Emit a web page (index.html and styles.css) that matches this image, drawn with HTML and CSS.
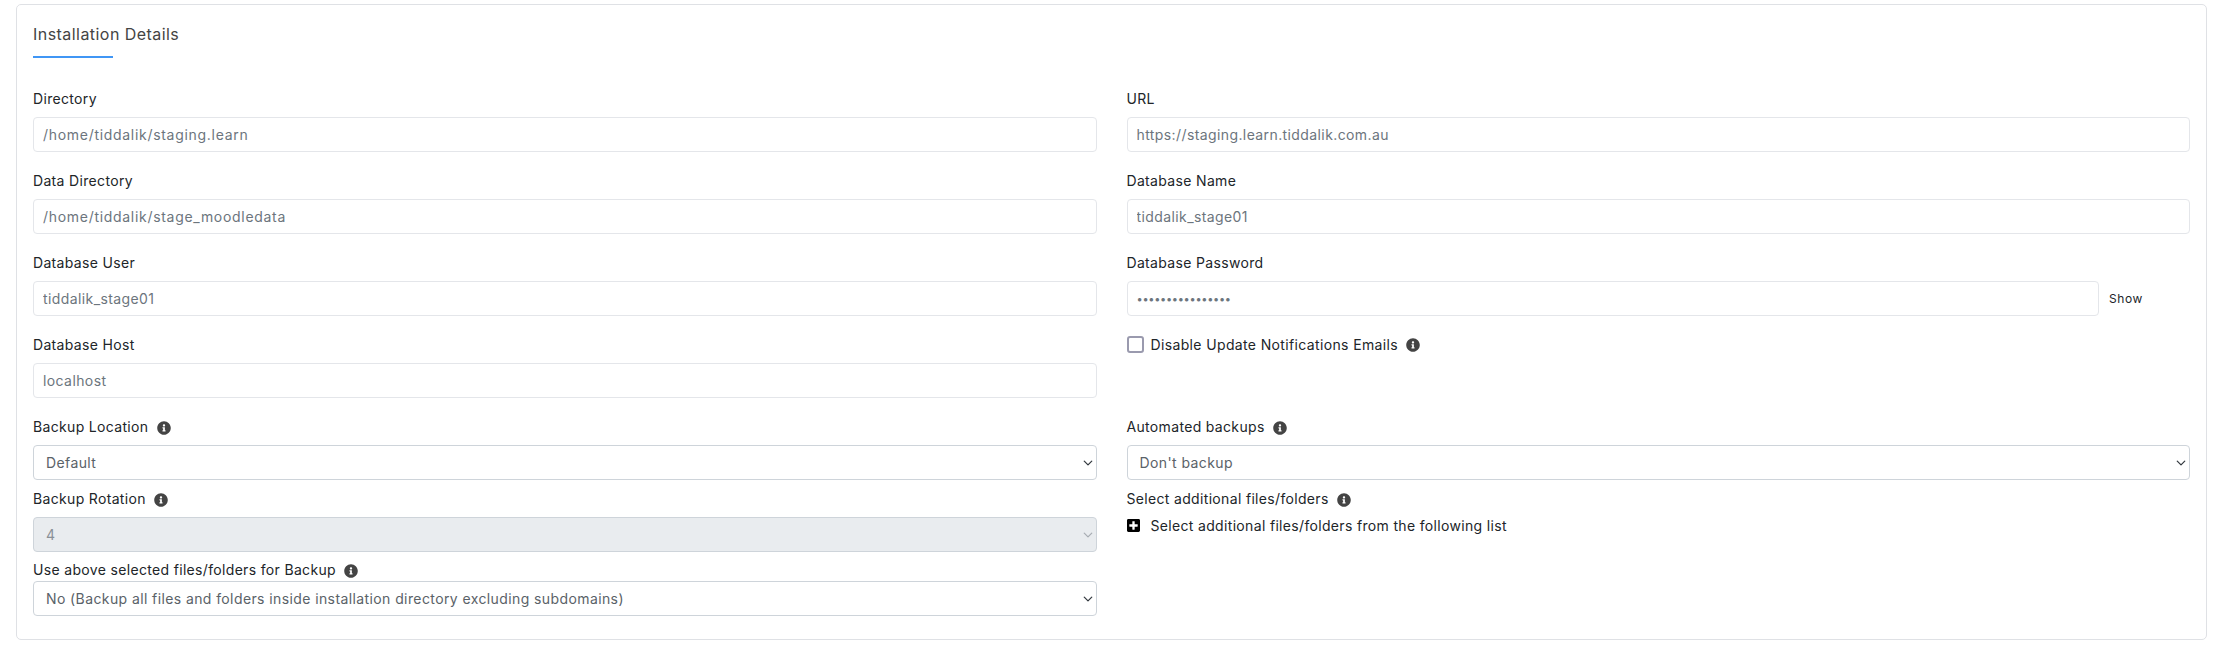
FILE: index.html
```html
<!DOCTYPE html>
<html>
<head>
  <title>Installation Details</title>
  <link rel="stylesheet" href="styles.css">
</head>
<body>

<svg class="icon-defs" width="0" height="0">
  <symbol id="info" viewBox="0 0 512 512"><path d="M256 8C119.043 8 8 119.083 8 256c0 136.997 111.043 248 248 248s248-111.003 248-248C504 119.083 392.957 8 256 8zm0 110c23.196 0 42 18.804 42 42s-18.804 42-42 42-42-18.804-42-42 18.804-42 42-42zm56 254c0 6.627-5.373 12-12 12h-88c-6.627 0-12-5.373-12-12v-24c0-6.627 5.373-12 12-12h12v-64h-12c-6.627 0-12-5.373-12-12v-24c0-6.627 5.373-12 12-12h64c6.627 0 12 5.373 12 12v100h12c6.627 0 12 5.373 12 12v24z"/></symbol>
  <symbol id="plus" viewBox="0 0 448 512"><path d="M400 32H48C21.5 32 0 53.5 0 80v352c0 26.5 21.5 48 48 48h352c26.5 0 48-21.5 48-48V80c0-26.5-21.5-48-48-48zm-32 252c0 6.6-5.4 12-12 12h-92v92c0 6.6-5.4 12-12 12h-56c-6.6 0-12-5.4-12-12v-92H92c-6.6 0-12-5.4-12-12v-56c0-6.6 5.4-12 12-12h92v-92c0-6.6 5.4-12 12-12h56c6.6 0 12 5.4 12 12v92h92c6.6 0 12 5.4 12 12v56z"/></symbol>
</svg>

<div class="card">
  <h2 class="card-title">Installation Details</h2>

  <div class="form-grid">
    <div class="field">
      <label>Directory</label>
      <input class="control path" type="text" value="/home/tiddalik/staging.learn">
    </div>
    <div class="field">
      <label>URL</label>
      <input class="control" type="text" value="https://staging.learn.tiddalik.com.au">
    </div>

    <div class="field">
      <label>Data Directory</label>
      <input class="control path" type="text" value="/home/tiddalik/stage_moodledata">
    </div>
    <div class="field">
      <label>Database Name</label>
      <input class="control" type="text" value="tiddalik_stage01">
    </div>

    <div class="field">
      <label>Database User</label>
      <input class="control" type="text" value="tiddalik_stage01">
    </div>
    <div class="field">
      <label>Database Password</label>
      <div class="password-row">
        <input class="control" type="password" value="aaaaaaaaaaaaaaaa">
        <span class="show-link">Show</span>
      </div>
    </div>

    <div class="field">
      <label>Database Host</label>
      <input class="control" type="text" value="localhost">
    </div>
    <div class="field">
      <div class="check-row">
        <span class="checkbox"></span>
        <span>Disable Update Notifications Emails</span>
        <svg class="info"><use href="#info"/></svg>
      </div>
    </div>

    <div class="field field-tight">
      <label>Backup Location <svg class="info"><use href="#info"/></svg></label>
      <select class="control"><option>Default</option></select>
    </div>
    <div class="field field-tight">
      <label>Automated backups <svg class="info"><use href="#info"/></svg></label>
      <select class="control"><option>Don't backup</option></select>
    </div>

    <div class="field field-tight">
      <label>Backup Rotation <svg class="info"><use href="#info"/></svg></label>
      <select class="control" disabled><option>4</option></select>
    </div>
    <div class="field field-tight">
      <label>Select additional files/folders <svg class="info"><use href="#info"/></svg></label>
      <div class="add-row">
        <svg class="plus"><use href="#plus"/></svg>
        <span>Select additional files/folders from the following list</span>
      </div>
    </div>

    <div class="field field-last">
      <label>Use above selected files/folders for Backup <svg class="info"><use href="#info"/></svg></label>
      <select class="control"><option>No (Backup all files and folders inside installation directory excluding subdomains)</option></select>
    </div>
  </div>
</div>

</body>
</html>
```

FILE: styles.css
```css
body { margin: 0; padding: 4px 10px 8px 16px; background: #fff; font-family: "Inter", "Open Sans", sans-serif; font-size: 14px; color: #212529; }
.icon-defs { position: absolute; }

.card { border: 1px solid #dfe1e5; border-radius: 5px; padding: 17px 16px 23px; background: #fff; }
.card-title { margin: 0 0 32px; height: 36px; font-size: 16px; font-weight: 400; line-height: 24px; letter-spacing: 0.45px; color: #444; position: relative; }
.card-title::after { content: ""; position: absolute; left: 0; bottom: 0; width: 80px; height: 2px; background: #4096f5; }

.form-grid { display: grid; grid-template-columns: 1fr 1fr; column-gap: 30px; }
.field { margin-bottom: 20px; min-width: 0; }
.field label { display: block; height: 21px; line-height: 18px; margin-bottom: 6px; font-size: 14px; letter-spacing: 0.33px; color: #212529; }
.field-tight { margin-bottom: 10px; }
.field-last { margin-bottom: 0; margin-top: -1px; }
.field-last label { height: 20px; line-height: 18px; margin-bottom: 0; }

.control { display: block; box-sizing: border-box; width: 100%; height: 35px; padding: 0 9px; border: 1px solid #e4e6ea; border-radius: 4px; background: #fff; font-family: inherit; font-size: 14px; letter-spacing: 0.4px; color: #6c757d; outline: none; }
.control.path { letter-spacing: 0.7px; }
select.control { appearance: none; padding-left: 12px; border-color: #ced4da; color: #5a6268; background: #fff url("data:image/svg+xml,%3csvg xmlns='http://www.w3.org/2000/svg' viewBox='0 0 16 16'%3e%3cpath fill='none' stroke='%23343a40' stroke-linecap='round' stroke-linejoin='round' stroke-width='2' d='M2 5l6 6 6-6'/%3e%3c/svg%3e") no-repeat right 3px center / 10px 10px; }
select.control:disabled { background-color: #e9ecef; color: #8a9097; opacity: 1; background-image: url("data:image/svg+xml,%3csvg xmlns='http://www.w3.org/2000/svg' viewBox='0 0 16 16'%3e%3cpath fill='none' stroke='%23a8adb3' stroke-linecap='round' stroke-linejoin='round' stroke-width='2' d='M2 5l6 6 6-6'/%3e%3c/svg%3e"); }

.password-row { display: flex; align-items: center; }
.password-row .control { flex: 1; letter-spacing: -0.3px; font-size: 11px; }
.show-link { width: 91px; padding-left: 10px; box-sizing: border-box; font-size: 12px; letter-spacing: 0.6px; color: #212529; margin-top: -1px; }

.check-row { display: flex; align-items: center; height: 17px; letter-spacing: 0.36px; }
.checkbox { box-sizing: border-box; width: 17px; height: 17px; margin-right: 7px; border: 2px solid #9a9aae; border-radius: 3px; }
.check-row .info { margin-left: 8px; }

.info { display: inline-block; width: 14px; height: 14px; margin-left: 4px; vertical-align: -3px; fill: #444; }
.add-row { display: flex; align-items: center; gap: 11px; margin-top: 2px; letter-spacing: 0.33px; }
.plus { width: 13px; height: 15px; fill: #000; }
```
